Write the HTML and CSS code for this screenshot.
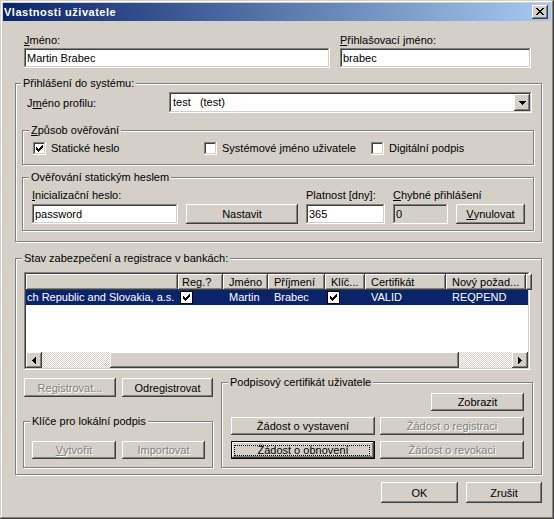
FILE: index.html
```html
<!DOCTYPE html>
<html lang="cs">
<head>
  <meta charset="UTF-8">
  <title>Vlastnosti uživatele</title>
  <link rel="stylesheet" href="styles.css">
</head>
<body>
  <div class="window">
    <div class="titlebar">
      <span class="title">Vlastnosti uživatele</span>
      <span class="btn close-btn">
        <svg width="8" height="7" viewBox="0 0 8 7" shape-rendering="crispEdges"><path d="M0 0h2v1H0z M6 0h2v1H6z M1 1h2v1H1z M5 1h2v1H5z M2 2h4v1H2z M3 3h2v1H3z M2 4h4v1H2z M1 5h2v1H1z M5 5h2v1H5z M0 6h2v1H0z M6 6h2v1H6z"/></svg>
      </span>
    </div>

    <div class="client">
      <div class="top-fields">
        <label class="field field-name">
          <span class="lbl"><u>J</u>méno:</span>
          <input class="edit" type="text" value="Martin Brabec">
        </label>
        <label class="field field-login">
          <span class="lbl"><u>P</u>řihlašovací jméno:</span>
          <input class="edit" type="text" value="brabec">
        </label>
      </div>

      <fieldset class="group g-login">
        <legend>Přihlášení do systému:</legend>
        <div class="profile-row">
          <span>J<u>m</u>éno profilu:</span>
          <div class="combo">
            <span class="combo-text">test   (test)</span>
            <span class="btn combo-btn">
              <svg width="7" height="4" viewBox="0 0 7 4" shape-rendering="crispEdges"><path d="M0 0h7v1H0z M1 1h5v1H1z M2 2h3v1H2z M3 3h1v1H3z"/></svg>
            </span>
          </div>
        </div>

        <fieldset class="group sub g-auth">
          <legend><u>Z</u>působ ověřování</legend>
          <div class="checks">
            <span class="check">
              <span class="box"><svg width="13" height="13" viewBox="0 0 13 13" shape-rendering="crispEdges"><path d="M3 5h1v3H3z M4 6h1v3H4z M5 7h1v3H5z M6 6h1v3H6z M7 5h1v3H7z M8 4h1v3H8z M9 3h1v3H9z"/></svg></span>
              Statické heslo
            </span>
            <span class="check"><span class="box"></span>Systémové jméno uživatele</span>
            <span class="check"><span class="box"></span>Digitální podpis</span>
          </div>
        </fieldset>

        <fieldset class="group sub g-static">
          <legend>Ověřování statickým heslem</legend>
          <div class="static-grid">
            <span class="lbl"><u>I</u>nicializační heslo:</span>
            <span class="lbl col-3">Platnost [dny]:</span>
            <span class="lbl col-4"><u>C</u>hybné přihlášení</span>
            <input class="edit" type="text" value="password">
            <span class="btn">Nastavit</span>
            <input class="edit" type="text" value="365">
            <input class="edit readonly" type="text" value="0" readonly>
            <span class="btn"><u>V</u>ynulovat</span>
          </div>
        </fieldset>
      </fieldset>

      <fieldset class="group g-banks">
        <legend>Stav zabezpečení a registrace v bankách:</legend>
        <div class="listview">
          <div class="lv-head">
            <span></span>
            <span class="hd-reg">Reg.?</span>
            <span>Jméno</span>
            <span>Příjmení</span>
            <span>Klíč...</span>
            <span>Certifikát</span>
            <span>Nový požad...</span>
            <span></span>
          </div>
          <div class="lv-body">
            <div class="lv-row selected">
              <span class="first">ch Republic and Slovakia, a.s.</span>
              <span class="cell-check"><svg width="13" height="13" viewBox="0 0 13 13" shape-rendering="crispEdges"><rect width="13" height="13"/><rect x="1" y="1" width="11" height="11" fill="#fff"/><path d="M3 5h1v3H3z M4 6h1v3H4z M5 7h1v3H5z M6 6h1v3H6z M7 5h1v3H7z M8 4h1v3H8z M9 3h1v3H9z"/></svg></span>
              <span>Martin</span>
              <span>Brabec</span>
              <span class="cell-check"><svg width="13" height="13" viewBox="0 0 13 13" shape-rendering="crispEdges"><rect width="13" height="13"/><rect x="1" y="1" width="11" height="11" fill="#fff"/><path d="M3 5h1v3H3z M4 6h1v3H4z M5 7h1v3H5z M6 6h1v3H6z M7 5h1v3H7z M8 4h1v3H8z M9 3h1v3H9z"/></svg></span>
              <span>VALID</span>
              <span>REQPEND</span>
              <span></span>
            </div>
          </div>
          <div class="hscroll">
            <span class="btn sb-arrow">
              <svg width="4" height="7" viewBox="0 0 4 7" shape-rendering="crispEdges"><path d="M3 0h1v7H3z M2 1h1v5H2z M1 2h1v3H1z M0 3h1v1H0z"/></svg>
            </span>
            <span class="sb-track track-left"></span>
            <span class="btn sb-thumb"></span>
            <span class="sb-track track-right"></span>
            <span class="btn sb-arrow">
              <svg width="4" height="7" viewBox="0 0 4 7" shape-rendering="crispEdges"><path d="M0 0h1v7H0z M1 1h1v5H1z M2 2h1v3H2z M3 3h1v1H3z"/></svg>
            </span>
          </div>
        </div>

        <div class="bank-bottom">
          <div class="bank-left">
            <div class="reg-buttons">
              <span class="btn disabled btn-reg">Registrovat...</span>
              <span class="btn btn-unreg">Odregistrovat</span>
            </div>
            <fieldset class="group g-keys">
              <legend>Klíče pro lokální podpis</legend>
              <div class="key-buttons">
                <span class="btn disabled btn-create"><u>V</u>ytvořit</span>
                <span class="btn disabled btn-import">Importovat</span>
              </div>
            </fieldset>
          </div>

          <fieldset class="group g-cert">
            <legend>Podpisový certifikát uživatele</legend>
            <div class="cert-grid">
              <span class="btn btn-show">Zobrazit</span>
              <span class="btn">Žádost o vystavení</span>
              <span class="btn disabled">Žádost o registraci</span>
              <span class="btn focused">Žádost o obnovení</span>
              <span class="btn disabled">Žádost o revokaci</span>
            </div>
          </fieldset>
        </div>
      </fieldset>

      <div class="dialog-buttons">
        <span class="btn btn-ok">OK</span>
        <span class="btn btn-cancel">Zrušit</span>
      </div>
    </div>
  </div>
</body>
</html>
```

FILE: styles.css
```css
* {
  box-sizing: border-box;
}
body {
  margin: 0;
  background: #d4d0c8;
  font-family: "Liberation Sans", Arial, sans-serif;
  font-size: 11px;
  color: #000;
}
u {
  text-underline-offset: 1px;
}

/* okno */
.window {
  width: 554px;
  height: 519px;
  padding: 3px;
  background: #d4d0c8;
  box-shadow: inset -1px -1px #404040, inset 1px 1px #d4d0c8, inset -2px -2px #808080, inset 2px 2px #fff;
}
.titlebar {
  height: 18px;
  display: flex;
  align-items: center;
  justify-content: space-between;
  padding: 0 3px 0 1px;
  background: linear-gradient(to right, #0a246a, #a6caf0);
}
.title {
  color: #fff;
  font-weight: bold;
  letter-spacing: 0.5px;
  line-height: 18px;
}

/* tlacitka */
.btn {
  display: flex;
  align-items: center;
  justify-content: center;
  background: #d4d0c8;
  white-space: nowrap;
  box-shadow: inset -1px -1px #404040, inset 1px 1px #fff, inset -2px -2px #808080, inset 2px 2px #d4d0c8;
}
.btn.disabled {
  color: #808080;
  text-shadow: 1px 1px #fff;
}
.btn.focused {
  position: relative;
  box-shadow: inset 0 0 0 1px #000, inset -2px -2px #404040, inset 2px 2px #fff, inset -3px -3px #808080, inset 3px 3px #d4d0c8;
}
.btn.focused::after {
  content: "";
  position: absolute;
  inset: 4px 5px 3px 3px;
  border: 1px dotted #000;
}
.close-btn {
  width: 16px;
  height: 14px;
  padding: 0 1px 1px 0;
}

/* pole */
.client {
  padding: 13px 9px 0 12px;
}
.top-fields {
  display: flex;
  gap: 10px;
  margin: 0 10px 0 9px;
}
.field {
  display: block;
}
.field-name {
  width: 306px;
}
.field-login {
  width: 191px;
}
.lbl {
  display: block;
  line-height: 13px;
  margin-bottom: 1px;
  white-space: nowrap;
}
.edit {
  display: block;
  width: 100%;
  height: 20px;
  margin: 0;
  border: 0;
  padding: 0 3px;
  font: inherit;
  color: #000;
  background: #fff;
  outline: none;
  box-shadow: inset -1px -1px #fff, inset 1px 1px #808080, inset -2px -2px #d4d0c8, inset 2px 2px #404040;
}
.edit.readonly {
  background: #d4d0c8;
}

/* skupiny */
.group {
  margin: 0;
  padding: 0;
  min-width: 0;
  border: 1px solid #808080;
  box-shadow: inset 1px 1px #fff, 1px 1px #fff;
}
.group > legend {
  margin-left: 6px;
  padding: 0 2px;
  line-height: 13px;
  background: #d4d0c8;
  white-space: nowrap;
}
.g-login {
  margin-top: 9px;
  padding-bottom: 10px;
}
.g-login > legend {
  margin-left: 5px;
}
.profile-row {
  display: flex;
  align-items: center;
  padding: 2px 9px 0 11px;
}
.combo {
  margin-left: auto;
  width: 363px;
  height: 21px;
  padding: 2px;
  display: flex;
  background: #fff;
  box-shadow: inset -1px -1px #fff, inset 1px 1px #808080, inset -2px -2px #d4d0c8, inset 2px 2px #404040;
}
.combo-text {
  flex: 1;
  padding-left: 2px;
  line-height: 17px;
  white-space: pre;
}
.combo-btn {
  width: 16px;
  height: 17px;
  padding-top: 1px;
}
.sub {
  margin: 11px 7px 0 6px;
}
.g-static {
  margin-top: 6px;
}
.checks {
  display: grid;
  grid-template-columns: 171px 167px 1fr;
  padding: 5px 0 9px 10px;
}
.check {
  display: flex;
  align-items: center;
  gap: 5px;
  line-height: 13px;
  white-space: nowrap;
}
.box {
  width: 13px;
  height: 13px;
  flex: none;
  background: #fff;
  box-shadow: inset -1px -1px #fff, inset 1px 1px #808080, inset -2px -2px #d4d0c8, inset 2px 2px #404040;
}
.box svg {
  display: block;
}
.static-grid {
  display: grid;
  grid-template-columns: 146px 112px 79px 55px 69px;
  column-gap: 8px;
  row-gap: 1px;
  padding: 5px 0 6px 9px;
}
.static-grid .col-3 {
  grid-column: 3;
}
.static-grid .col-4 {
  grid-column: 4 / span 2;
}
.static-grid .btn {
  height: 20px;
}

/* banky */
.g-banks {
  margin-top: 10px;
  padding: 7px 7px 6px 7px;
}
.g-banks > legend {
  margin-left: -1px;
}
.listview {
  width: 506px;
  height: 98px;
  margin-left: 1px;
  padding: 2px;
  display: flex;
  flex-direction: column;
  background: #fff;
  box-shadow: inset -1px -1px #fff, inset 1px 1px #808080, inset -2px -2px #d4d0c8, inset 2px 2px #404040;
}
.lv-head,
.lv-row {
  display: grid;
  grid-template-columns: 152px 45px 45px 57px 40px 81px 80px 1fr;
}
.lv-head span {
  height: 16px;
  line-height: 16px;
  padding-left: 6px;
  overflow: hidden;
  white-space: nowrap;
  background: #d4d0c8;
  box-shadow: inset -1px -1px #404040, inset 1px 1px #fff, inset -2px -2px #808080, inset 2px 2px #d4d0c8;
}
.lv-head .hd-reg {
  padding-left: 4px;
}
.lv-body {
  flex: 1;
}
.lv-row span {
  height: 15px;
  line-height: 15px;
  padding-left: 6px;
  overflow: hidden;
  white-space: nowrap;
}
.lv-row.selected {
  background: #0a246a;
  color: #fff;
}
.lv-row .first {
  padding-left: 1px;
}
.lv-row .cell-check {
  padding: 1px 0 0 2px;
}
.cell-check svg {
  display: block;
}
.hscroll {
  height: 16px;
  display: flex;
}
.sb-arrow {
  width: 16px;
  height: 16px;
}
.sb-track {
  background: repeating-conic-gradient(#fff 0 25%, #d4d0c8 0 50%) 0 0 / 2px 2px;
}
.track-left {
  width: 68px;
}
.sb-thumb {
  width: 349px;
}
.track-right {
  flex: 1;
}

.bank-bottom {
  display: flex;
  gap: 8px;
  margin-top: 6px;
}
.bank-left {
  width: 190px;
  display: flex;
  flex-direction: column;
}
.reg-buttons {
  display: flex;
  gap: 6px;
  margin: 2px 0 0 1px;
}
.reg-buttons .btn {
  height: 19px;
}
.btn-reg {
  width: 92px;
}
.btn-unreg {
  width: 91px;
}
.g-keys {
  margin-top: auto;
  padding: 13px 0 8px 8px;
}
.g-keys > legend {
  margin-left: -2px;
}
.key-buttons {
  display: flex;
  gap: 6px;
}
.key-buttons .btn {
  height: 18px;
}
.btn-create {
  width: 84px;
}
.btn-import {
  width: 83px;
}
.g-cert {
  width: 312px;
  padding: 4px 8px 8px 9px;
}
.g-cert > legend {
  margin-left: -3px;
}
.cert-grid {
  display: grid;
  grid-template-columns: 144px 144px;
  column-gap: 5px;
  row-gap: 6px;
}
.cert-grid .btn {
  height: 18px;
}
.cert-grid .btn-show {
  grid-column: 2;
  justify-self: end;
  width: 93px;
}

.dialog-buttons {
  display: flex;
  justify-content: flex-end;
  gap: 8px;
  margin-top: 7px;
}
.dialog-buttons .btn {
  height: 21px;
}
.btn-ok {
  width: 77px;
}
.btn-cancel {
  width: 76px;
}
```
